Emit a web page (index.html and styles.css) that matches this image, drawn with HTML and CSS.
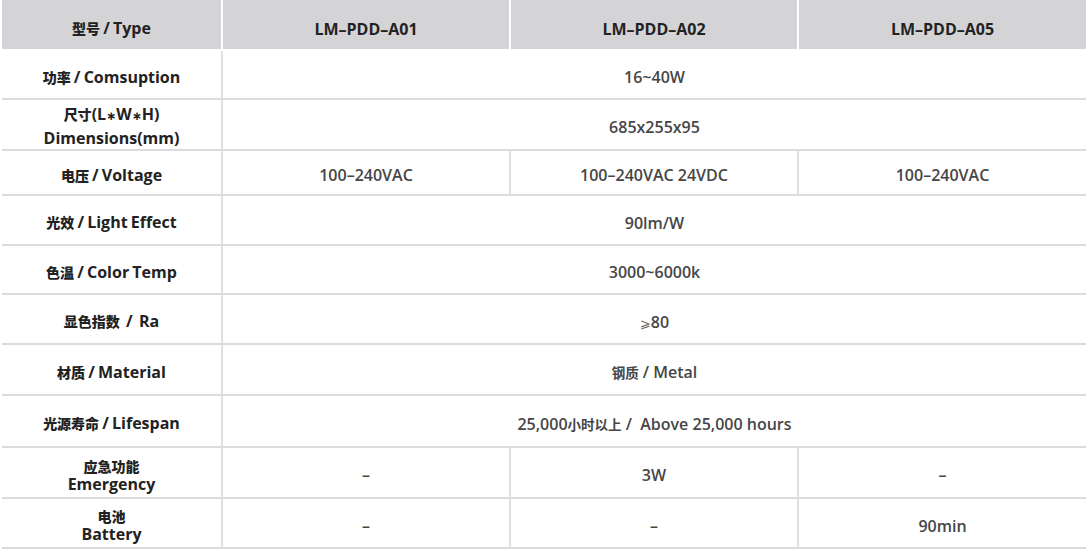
FILE: index.html
```html
<!DOCTYPE html>
<html lang="zh">
<head>
<meta charset="utf-8">
<link rel="stylesheet" href="styles.css">
</head>
<body>
<div class="spec">
  <div class="cell head label"><p><span class="cn">型号</span> / Type</p></div>
  <div class="cell head"><p>LM–PDD–A01</p></div>
  <div class="cell head"><p>LM–PDD–A02</p></div>
  <div class="cell head last"><p>LM–PDD–A05</p></div>

  <div class="cell label"><p><span class="cn">功率</span> / Comsuption</p></div>
  <div class="cell val span3"><p>16~40W</p></div>

  <div class="cell label dims"><p><span class="cn">尺寸</span>(L<span class="star">∗</span>W<span class="star">∗</span>H)<br>Dimensions(mm)</p></div>
  <div class="cell val span3"><p>685x255x95</p></div>

  <div class="cell label"><p><span class="cn">电压</span> / Voltage</p></div>
  <div class="cell val"><p>100–240VAC</p></div>
  <div class="cell val"><p>100–240VAC 24VDC</p></div>
  <div class="cell val last"><p>100–240VAC</p></div>

  <div class="cell label"><p><span class="cn">光效</span> / Light Effect</p></div>
  <div class="cell val span3"><p>90lm/W</p></div>

  <div class="cell label"><p><span class="cn">色温</span> / Color Temp</p></div>
  <div class="cell val span3"><p>3000~6000k</p></div>

  <div class="cell label"><p><span class="cn">显色指数</span>&nbsp; /&nbsp; Ra</p></div>
  <div class="cell val span3"><p><span class="ge">⩾</span>80</p></div>

  <div class="cell label"><p><span class="cn">材质</span> / Material</p></div>
  <div class="cell val span3"><p><span class="cn">钢质</span> / Metal</p></div>

  <div class="cell label"><p><span class="cn">光源寿命</span> / Lifespan</p></div>
  <div class="cell val span3"><p>25,000<span class="cn">小时以上</span> /&nbsp; Above 25,000 hours</p></div>

  <div class="cell label stack"><p><span class="cn">应急功能</span><br>Emergency</p></div>
  <div class="cell val"><p>–</p></div>
  <div class="cell val"><p>3W</p></div>
  <div class="cell val last"><p>–</p></div>

  <div class="cell label stack"><p><span class="cn">电池</span><br>Battery</p></div>
  <div class="cell val"><p>–</p></div>
  <div class="cell val"><p>–</p></div>
  <div class="cell val last"><p>90min</p></div>
</div>
</body>
</html>
```

FILE: styles.css
```css
html, body {
  margin: 0;
  padding: 0;
  background: #ffffff;
}

body {
  font-family: "Open Sans", "Noto Sans CJK SC", sans-serif;
}

.spec {
  display: grid;
  grid-template-columns: 221px 288px 288px 287px;
  grid-template-rows: 51px 49px 51px 45px 50px 49px 50px 51px 52px 51px 50px;
  margin-left: 2px;
  width: 1084px;
}

.cell {
  box-sizing: border-box;
  display: flex;
  align-items: center;
  justify-content: center;
  text-align: center;
  border-right: 2px solid #e0e0e0;
  border-bottom: 2px solid #dcdcdc;
  font-size: 16px;
  font-weight: 600;
  color: #464646;
  padding-top: 5px;
}

.cell p {
  margin: 0;
}

.cell.last {
  border-right: none;
}

.head {
  background: #d4d4d6;
  border-right: 2px solid #ffffff;
  border-bottom: 2px solid #ffffff;
  color: #222222;
  font-weight: 700;
  padding-top: 8px;
}

.label {
  color: #222222;
  font-weight: 700;
  line-height: 19px;
  word-spacing: -1px;
}

.label.dims {
  line-height: 22px;
  padding-top: 2px;
}

.label.stack {
  line-height: 18px;
  padding-top: 4px;
}

.span3 {
  grid-column: span 3;
  border-right: none;
}

.cn {
  font-family: "Noto Sans CJK SC", sans-serif;
  font-size: 14px;
  font-weight: 900;
}

.val .cn {
  font-size: 13.5px;
  font-weight: 700;
}

.star {
  font-family: "DejaVu Sans", sans-serif;
  font-size: 12px;
}

.ge {
  font-family: "DejaVu Sans", sans-serif;
  font-size: 13px;
  font-weight: 400;
  color: #666666;
}
```
